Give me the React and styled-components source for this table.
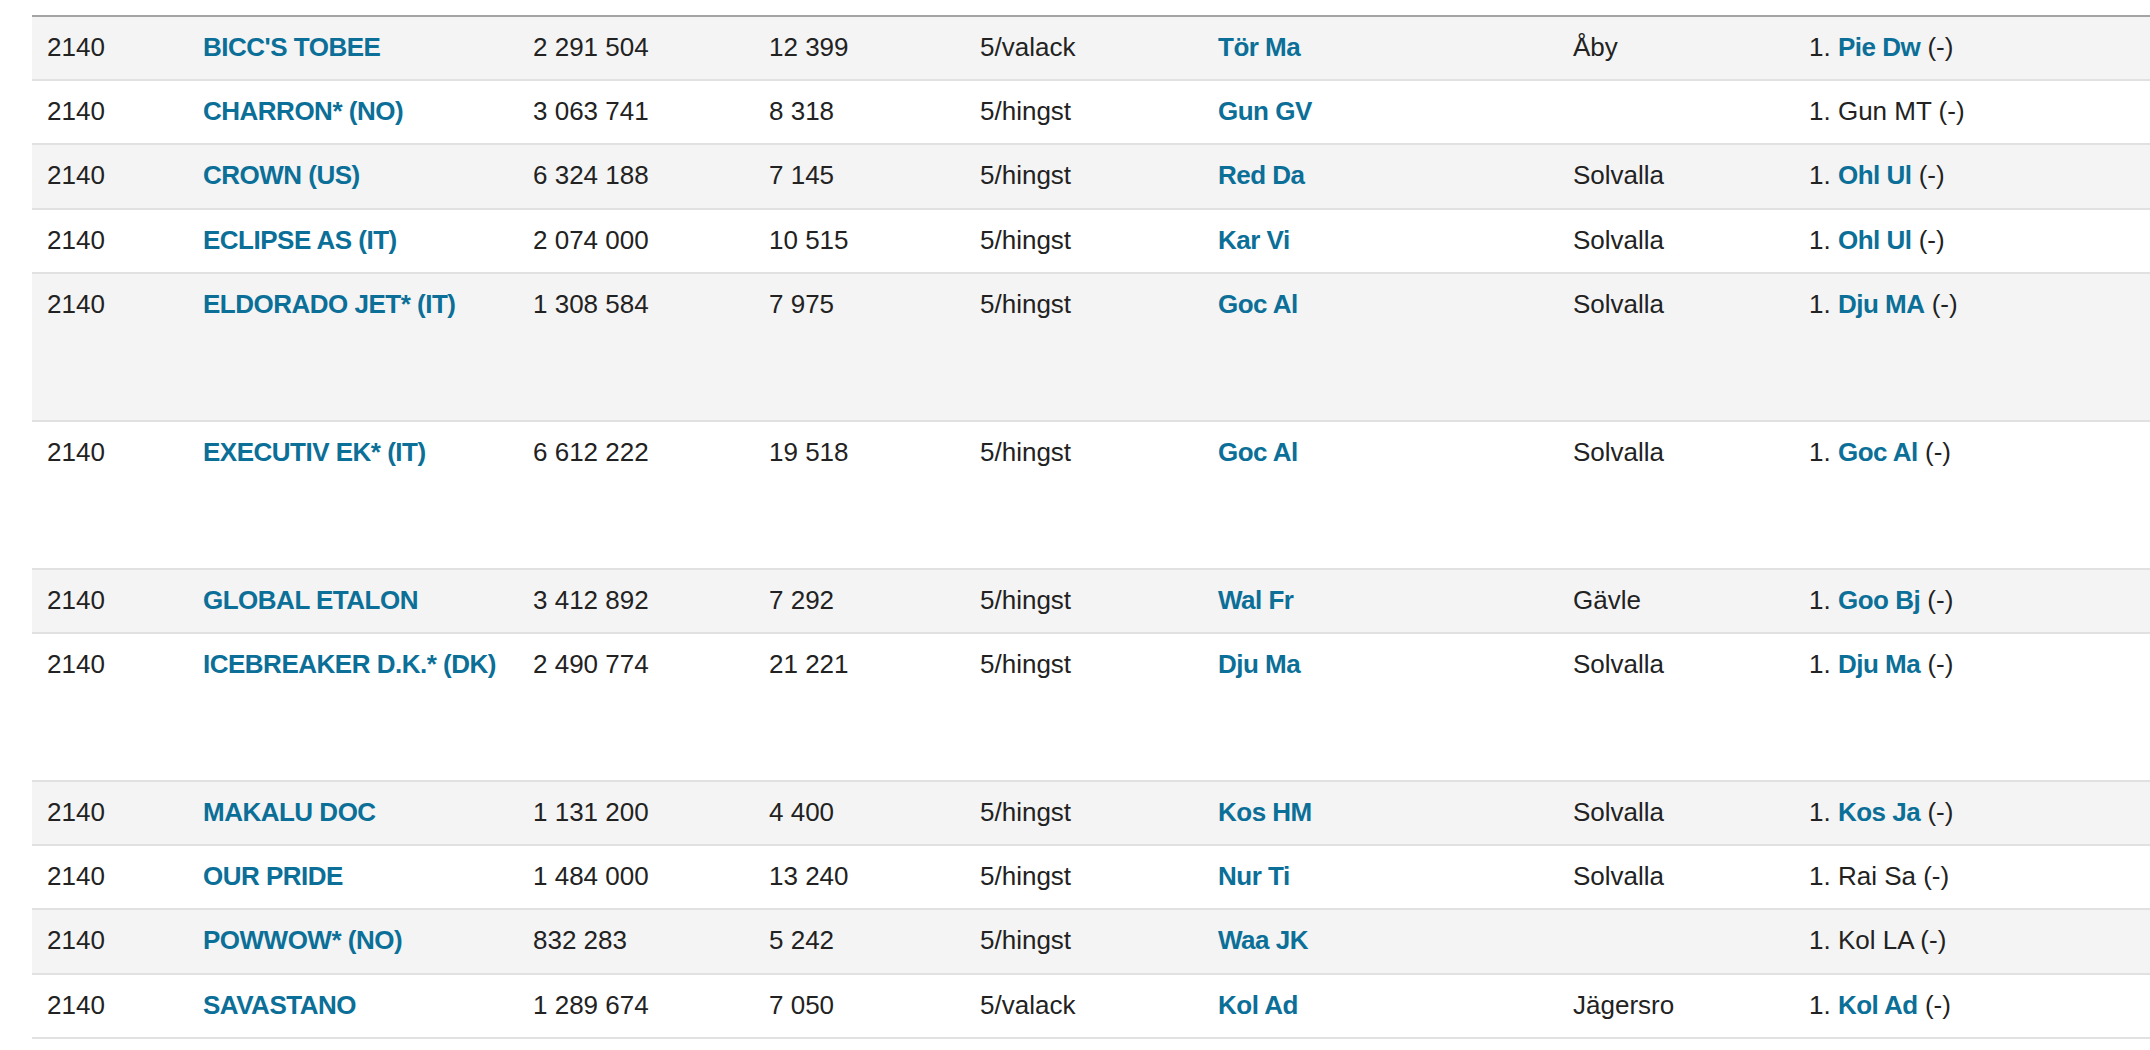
import React from 'react';
import styled, { createGlobalStyle } from 'styled-components';

const GlobalStyle = createGlobalStyle`
  body {
    margin: 0;
    background: #fff;
    font-family: "Liberation Sans", Arial, sans-serif;
  }
`;

const Page = styled.div`
  padding: 15px 0 0 32px;
  overflow: hidden;
`;

const Table = styled.div`
  border-top: 2px solid #a4a4a4;
  width: 2200px;
`;

const Row = styled.div`
  display: grid;
  grid-template-columns: 156px 330px 236px 211px 238px 355px 236px 1fr;
  height: ${p => (p.$tall ? 146 : 62.2)}px;
  border-bottom: 2px solid #e1e1e1;
  background: ${p => (p.$striped ? '#f4f4f4' : '#fff')};
`;

const Cell = styled.div`
  padding: 15px 0 0 15px;
  font-size: 26px;
  line-height: 30px;
  color: #222;
  white-space: nowrap;
`;

const Link = styled.a`
  color: #0b6f98;
  font-weight: 700;
  text-decoration: none;
  letter-spacing: -0.5px;
`;

const rows = [
  ["BICC'S TOBEE", '2 291 504', '12 399', '5/valack', 'Tör Ma', 'Åby', 'Pie Dw', true],
  ['CHARRON* (NO)', '3 063 741', '8 318', '5/hingst', 'Gun GV', '', 'Gun MT', false],
  ['CROWN (US)', '6 324 188', '7 145', '5/hingst', 'Red Da', 'Solvalla', 'Ohl Ul', true],
  ['ECLIPSE AS (IT)', '2 074 000', '10 515', '5/hingst', 'Kar Vi', 'Solvalla', 'Ohl Ul', true],
  ['ELDORADO JET* (IT)', '1 308 584', '7 975', '5/hingst', 'Goc Al', 'Solvalla', 'Dju MA', true, true],
  ['EXECUTIV EK* (IT)', '6 612 222', '19 518', '5/hingst', 'Goc Al', 'Solvalla', 'Goc Al', true, true],
  ['GLOBAL ETALON', '3 412 892', '7 292', '5/hingst', 'Wal Fr', 'Gävle', 'Goo Bj', true],
  ['ICEBREAKER D.K.* (DK)', '2 490 774', '21 221', '5/hingst', 'Dju Ma', 'Solvalla', 'Dju Ma', true, true],
  ['MAKALU DOC', '1 131 200', '4 400', '5/hingst', 'Kos HM', 'Solvalla', 'Kos Ja', true],
  ['OUR PRIDE', '1 484 000', '13 240', '5/hingst', 'Nur Ti', 'Solvalla', 'Rai Sa', false],
  ['POWWOW* (NO)', '832 283', '5 242', '5/hingst', 'Waa JK', '', 'Kol LA', false],
  ['SAVASTANO', '1 289 674', '7 050', '5/valack', 'Kol Ad', 'Jägersro', 'Kol Ad', true],
];

export default function App() {
  return (
    <Page>
      <GlobalStyle />
      <Table>
        {rows.map(([name, money, points, age, driver, track, trainer, trainerLink, tall], i) => (
          <Row key={name} $striped={i % 2 === 0} $tall={tall}>
            <Cell>2140</Cell>
            <Cell><Link href="#">{name}</Link></Cell>
            <Cell>{money}</Cell>
            <Cell>{points}</Cell>
            <Cell>{age}</Cell>
            <Cell><Link href="#">{driver}</Link></Cell>
            <Cell>{track}</Cell>
            <Cell>
              1. {trainerLink ? <Link href="#">{trainer}</Link> : trainer} (-)
            </Cell>
          </Row>
        ))}
      </Table>
    </Page>
  );
}
